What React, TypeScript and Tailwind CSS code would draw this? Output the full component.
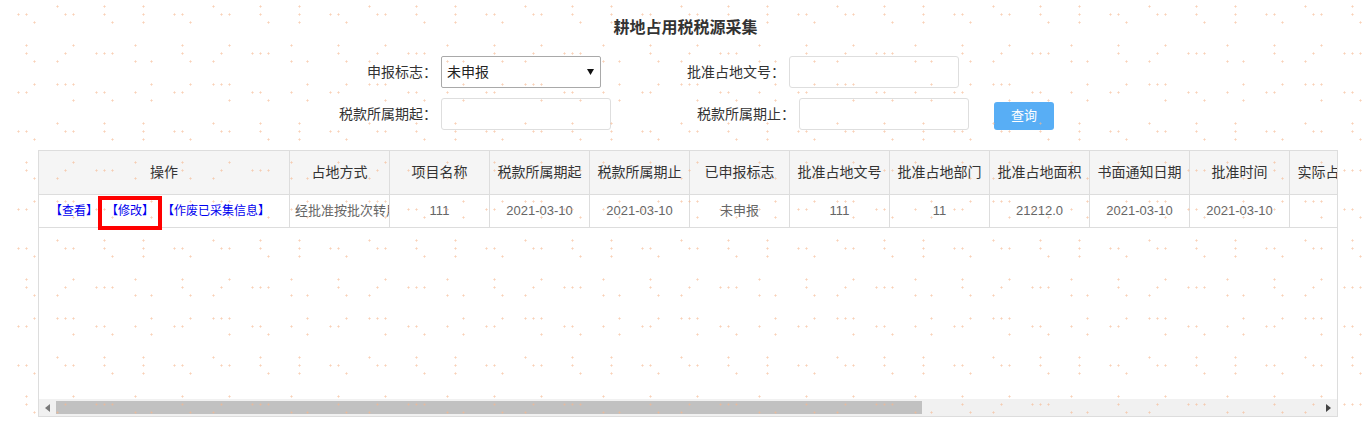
import React from 'react';

const rows: [number, number[]][] = [
  [6.7, [57.3, 104.3, 143.3]],
  [14.7, [18.3, 26.3, 65.3, 73.3, 104.3, 143.3]],
  [22.7, [34.3, 112.3, 143.3]],
  [45.3, [26.3, 73.3, 135.3]],
  [53.3, [26.3, 65.3, 96.3, 104.3, 112.3]],
  [61.3, [34.3, 57.3, 135.3, 151.3]],
  [84.3, [34.3, 57.3, 65.3, 73.3, 151.3]],
  [92.3, [18.3, 26.3, 96.3, 104.3, 135.3]],
  [100.3, [73.3, 112.3, 151.3]],
];

function Watermark() {
  const rects: React.ReactNode[] = [];
  rows.forEach(([y, xs]) => {
    const cy = Math.floor(y) + 0.5;
    xs.forEach((x) => {
      const cx = Math.floor(x) + 0.5;
      rects.push(<rect key={`h${cx}-${cy}`} x={cx - 1.5} y={cy - 0.5} width={3} height={1} />);
      rects.push(<rect key={`v${cx}-${cy}`} x={cx - 0.5} y={cy - 1.5} width={1} height={3} />);
    });
  });
  return (
    <svg className="pointer-events-none absolute inset-0 h-full w-full" xmlns="http://www.w3.org/2000/svg">
      <defs>
        <pattern id="wm" width="156" height="117" patternUnits="userSpaceOnUse">
          <g fill="#f5b78f" fillOpacity="0.4">{rects}</g>
        </pattern>
      </defs>
      <rect width="100%" height="100%" fill="url(#wm)" />
    </svg>
  );
}

const headers = [
  '占地方式',
  '项目名称',
  '税款所属期起',
  '税款所属期止',
  '已申报标志',
  '批准占地文号',
  '批准占地部门',
  '批准占地面积',
  '书面通知日期',
  '批准时间',
  '实际占地面积',
  '占地位置',
  '土地用途',
  '征收品目',
  '计税面积',
  '适用税额',
];
const values = [
  '经批准按批次转用',
  '111',
  '2021-03-10',
  '2021-03-10',
  '未申报',
  '111',
  '11',
  '21212.0',
  '2021-03-10',
  '2021-03-10',
  '',
  '',
  '',
  '',
  '',
  '',
];

export default function App() {
  return (
    <div className="relative h-[432px] w-full overflow-hidden bg-white font-['Liberation_Sans','Noto_Sans_CJK_SC',sans-serif] text-[#333]">
      <div className="pt-[16px] text-center text-[16px] font-bold leading-[24px] text-[#333]">耕地占用税税源采集</div>

      <div className="mt-[16px] flex h-[32px] items-center text-[14px]">
        <div className="w-[437px] text-right leading-[32px]">申报标志：</div>
        <div className="ml-[4px] flex h-[32px] w-[160px] items-center justify-between rounded-[2px] border border-[#a9a9a9] bg-white pl-[5px] pr-[6px]">
          <span className="text-[14px] text-[#222]">未申报</span>
          <svg width="7" height="6" viewBox="0 0 7 6">
            <polygon points="0,0 7,0 3.5,6" fill="#111" />
          </svg>
        </div>
        <div className="w-[184px] text-right leading-[32px]">批准占地文号：</div>
        <div className="ml-[4px] h-[32px] w-[170px] rounded-[3px] border border-[#dedede] bg-white" />
      </div>

      <div className="mt-[10px] flex h-[32px] items-center text-[14px]">
        <div className="w-[437px] text-right leading-[32px]">税款所属期起：</div>
        <div className="ml-[4px] h-[32px] w-[170px] rounded-[3px] border border-[#dedede] bg-white" />
        <div className="w-[184px] text-right leading-[32px]">税款所属期止：</div>
        <div className="ml-[4px] h-[32px] w-[170px] rounded-[3px] border border-[#dedede] bg-white" />
        <button className="ml-[25px] mt-[4px] flex h-[28px] w-[60px] items-center justify-center rounded-[3px] bg-[#58aef5] text-[13px] text-white">
          查询
        </button>
      </div>

      <div className="ml-[38px] mt-[20px] flex h-[267px] w-[1300px] flex-col border border-[#dddddd] bg-white">
        <div className="flex-1 overflow-hidden">
          <div className="flex h-[44px] w-max bg-[#f5f5f5]">
            <div className="flex w-[251px] shrink-0 items-center justify-center border-b border-r border-[#dddddd] text-[14px] text-[#333]">
              操作
            </div>
            {headers.map((h) => (
              <div
                key={h}
                className="flex w-[100px] shrink-0 items-center justify-center overflow-hidden whitespace-nowrap border-b border-r border-[#dddddd] text-[14px] text-[#333]"
              >
                {h}
              </div>
            ))}
          </div>
          <div className="flex h-[33px] w-max">
            <div className="flex w-[251px] shrink-0 items-center gap-[8px] border-b border-r border-[#dddddd] pl-[11px] text-[12px] text-[#0000f0]">
              <span>【查看】</span>
              <span>【修改】</span>
              <span>【作废已采集信息】</span>
            </div>
            {values.map((v, i) => (
              <div
                key={i}
                className="flex w-[100px] shrink-0 items-center justify-center overflow-hidden whitespace-nowrap border-b border-r border-[#dddddd] px-[5px] text-[13px] text-[#666]"
              >
                <span className={i === 0 ? 'w-full text-left' : ''}>{v}</span>
              </div>
            ))}
          </div>
        </div>
        <div className="flex h-[17px] w-full shrink-0 items-center bg-[#f1f1f1]">
          <div className="flex h-[17px] w-[17px] items-center justify-center">
            <svg width="5" height="8" viewBox="0 0 5 8">
              <polygon points="5,0 5,8 0,4" fill="#7a7a7a" />
            </svg>
          </div>
          <div className="h-[13px] w-[866px] bg-[#c1c1c1]" />
          <div className="flex-1" />
          <div className="flex h-[17px] w-[17px] items-center justify-center">
            <svg width="5" height="8" viewBox="0 0 5 8">
              <polygon points="0,0 0,8 5,4" fill="#444" />
            </svg>
          </div>
        </div>
      </div>

      <div className="pointer-events-none absolute left-[98px] top-[196px] h-[34px] w-[64px] border-[4px] border-[#ff0000]" />

      <Watermark />
    </div>
  );
}
